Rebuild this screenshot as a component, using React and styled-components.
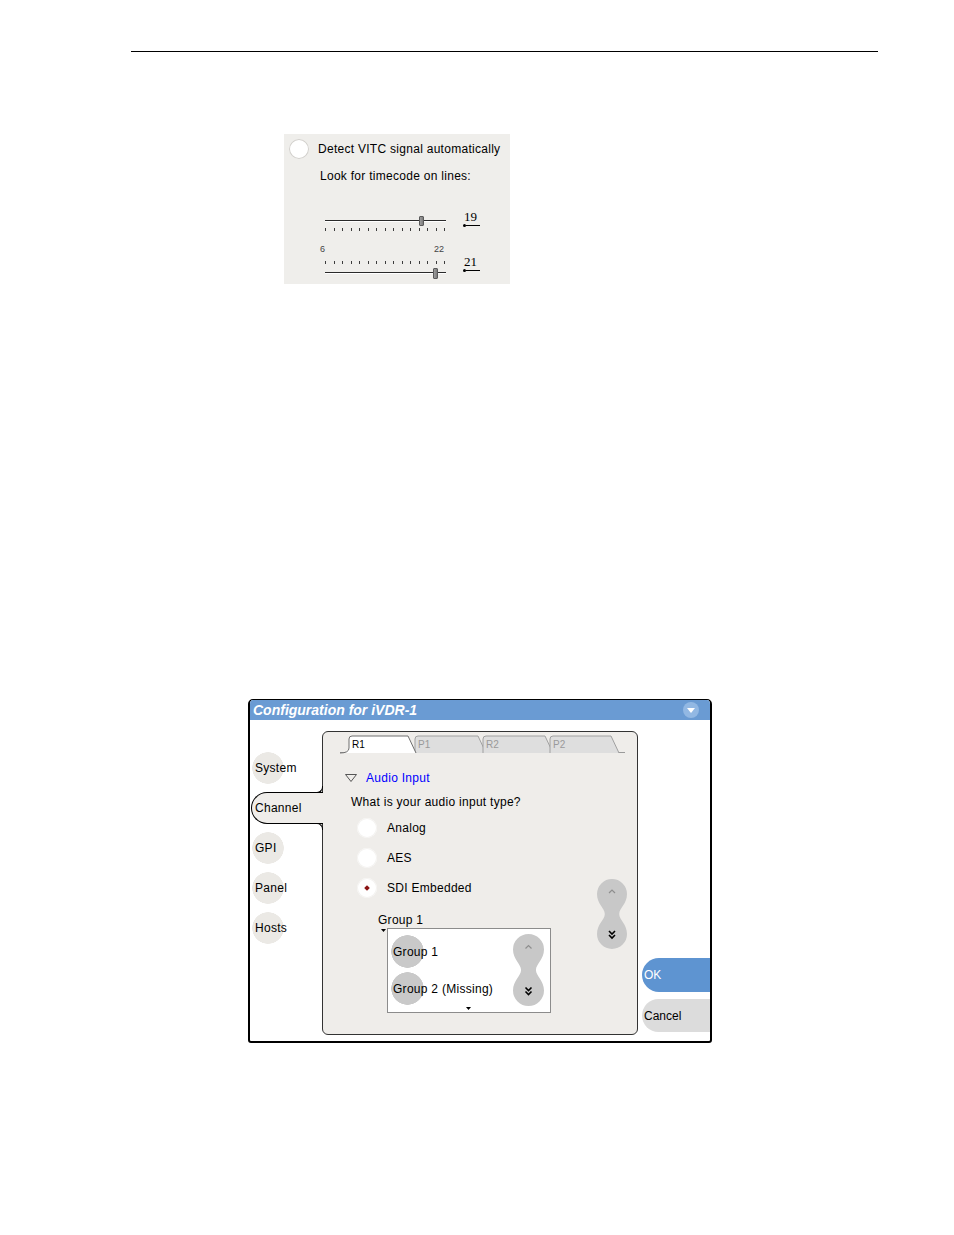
import React from 'react';
import styled, { createGlobalStyle } from 'styled-components';

const GlobalStyle = createGlobalStyle`
  html, body {
    margin: 0;
    padding: 0;
    background: #fff;
  }
  body {
    font-family: "Liberation Sans", Arial, sans-serif;
    font-size: 12px;
    letter-spacing: 0.28px;
    color: #000;
  }
`;

const Page = styled.div`
  width: 954px;
  height: 1235px;
  padding-top: 51px;
  box-sizing: border-box;
  overflow: hidden;
`;

const Rule = styled.div`
  margin-left: 131px;
  width: 747px;
  border-top: 1px solid #000;
`;

/* ---------- VITC panel ---------- */

const VitcPanel = styled.div`
  margin: 82px 0 0 284px;
  width: 226px;
  height: 150px;
  padding: 5px 0 0 5px;
  box-sizing: border-box;
  background: #efeeeb;
`;

const OptionRow = styled.div`
  display: flex;
  align-items: center;
  height: 20px;
`;

const Radio = styled.span`
  flex-shrink: 0;
  position: relative;
  width: 20px;
  height: 20px;
  border-radius: 50%;
  background: #fff;
  box-shadow: inset 0 0 0 1px ${p => (p.$ring ? '#d2d0cc' : '#f4f3f1')};
  &::after {
    content: '';
    display: ${p => (p.$checked ? 'block' : 'none')};
    position: absolute;
    left: 8px;
    top: 8px;
    width: 4px;
    height: 4px;
    transform: rotate(45deg);
    background: #8b1414;
  }
`;

const OptionLabel = styled.span`
  margin-left: ${p => p.$gap || 9}px;
  line-height: 14px;
`;

const Caption = styled.div`
  margin: 10px 0 0 31px;
  line-height: 14px;
`;

const SliderRow = styled.div`
  display: flex;
  align-items: flex-start;
  margin: ${p => p.$mt}px 0 0 36px;
`;

const SliderBody = styled.div`
  position: relative;
  width: 121px;
  display: flex;
  flex-direction: column;
`;

const Track = styled.div`
  height: 1px;
  margin-top: ${p => p.$mt}px;
  background: #2a2a2a;
  border-bottom: 1px solid #fff;
`;

const Ticks = styled.div`
  display: flex;
  justify-content: space-between;
  margin-top: ${p => p.$mt}px;
  padding: 0 1px 0 0;
`;

const Tick = styled.span`
  width: 1px;
  height: 3px;
  background: #3c3c3c;
`;

const Thumb = styled.div`
  position: absolute;
  left: ${p => p.$x}px;
  top: ${p => p.$y}px;
  width: 5px;
  height: ${p => p.$h}px;
  box-sizing: border-box;
  border: 1px solid #5a5a5a;
  border-radius: 1px;
  background: linear-gradient(90deg, #9c9c9c, #7d7d7d);
`;

const ValueBox = styled.div`
  margin-left: 17px;
  display: flex;
  flex-direction: column;
`;

const Value = styled.span`
  font-family: "Liberation Serif", "Times New Roman", serif;
  font-size: 13px;
  line-height: 12px;
  letter-spacing: 0;
  padding-left: 1px;
`;

const Marker = styled.div`
  display: flex;
  align-items: center;
  margin-top: 1px;
`;

const Dot = styled.span`
  width: 3px;
  height: 3px;
  border-radius: 50%;
  background: #000;
`;

const MarkerLine = styled.span`
  width: 14px;
  height: 1px;
  background: #000;
`;

const ScaleRow = styled.div`
  display: flex;
  justify-content: space-between;
  width: 124px;
  margin: 14px 0 0 31px;
  font-size: 9px;
  line-height: 9px;
  letter-spacing: 0;
  color: #444;
`;

const TICKS = Array.from({ length: 15 });

function Slider({ value, thumbX, variant }) {
  const top = variant === 'top';
  return (
    <SliderRow $mt={top ? 28 : 2}>
      <SliderBody>
        {top ? (
          <>
            <Track $mt={9} />
            <Ticks $mt={6}>
              {TICKS.map((_, i) => <Tick key={i} />)}
            </Ticks>
            <Thumb $x={thumbX} $y={5} $h={10} />
          </>
        ) : (
          <>
            <Ticks $mt={5}>
              {TICKS.map((_, i) => <Tick key={i} />)}
            </Ticks>
            <Track $mt={8} />
            <Thumb $x={thumbX} $y={12} $h={11} />
          </>
        )}
      </SliderBody>
      <ValueBox>
        <Value>{value}</Value>
        <Marker>
          <Dot />
          <MarkerLine />
        </Marker>
      </ValueBox>
    </SliderRow>
  );
}

/* ---------- Dialog ---------- */

const Dialog = styled.div`
  margin: 415px 0 0 248px;
  width: 464px;
  height: 344px;
  box-sizing: border-box;
  border: 2px solid #000;
  border-top-width: 1px;
  border-radius: 5px 5px 3px 3px;
  background: #fff;
  overflow: hidden;
  display: flex;
  flex-direction: column;
`;

const TitleBar = styled.div`
  flex-shrink: 0;
  height: 20px;
  display: flex;
  align-items: center;
  justify-content: space-between;
  padding: 0 11px 0 3px;
  background: #6a9bd3;
`;

const Title = styled.span`
  color: #fff;
  font-weight: bold;
  font-style: italic;
  font-size: 14px;
  line-height: 16px;
  letter-spacing: 0;
`;

const MenuButton = styled.span`
  width: 16px;
  height: 16px;
  border-radius: 50%;
  background: #92b8e3;
  display: flex;
  align-items: center;
  justify-content: center;
`;

const DialogBody = styled.div`
  flex: 1;
  display: flex;
`;

const NavCol = styled.div`
  width: 72px;
  flex-shrink: 0;
  padding-top: 32px;
  display: flex;
  flex-direction: column;
  gap: 8px;
`;

const NavItem = styled.div`
  position: relative;
  display: flex;
  align-items: center;
  height: 32px;
  box-sizing: border-box;
  padding-left: 5px;
  background: radial-gradient(circle at 18px 16px, #ebe9e5 0 15.5px, transparent 16px);

  &[data-active='true'] {
    z-index: 1;
    margin: 0 -1px 0 1px;
    padding-left: 3px;
    border: 1px solid #000;
    border-right: none;
    border-radius: 16px 0 0 16px;
    background: #efedea;
  }

  &[data-active='true']::before,
  &[data-active='true']::after {
    content: '';
    position: absolute;
    right: 0;
    width: 6px;
    height: 6px;
    border-right: 1px solid #000;
  }

  &[data-active='true']::before {
    top: -7px;
    border-bottom: 1px solid #000;
    border-bottom-right-radius: 6px;
  }

  &[data-active='true']::after {
    bottom: -7px;
    border-top: 1px solid #000;
    border-top-right-radius: 6px;
  }
`;

const Panel = styled.div`
  width: 316px;
  flex-shrink: 0;
  margin: 11px 0 6px;
  box-sizing: border-box;
  border: 1px solid #333;
  border-radius: 6px;
  background: #efedea;
  display: flex;
  flex-direction: column;
`;

const TabStrip = styled.div`
  display: flex;
  width: 285px;
  height: 17px;
  margin: 4px 0 0 17px;
  padding-left: 9px;
  box-sizing: border-box;
  border-bottom: 1px solid #9a9a9a;
`;

const Tab = styled.div`
  position: relative;
  flex-shrink: 0;
  width: ${p => p.$w}px;
  height: 17px;
  z-index: ${p => (p.$active ? 2 : 1)};

  svg {
    position: absolute;
    left: 0;
    top: 0;
    overflow: visible;
  }
`;

const TabLabel = styled.span`
  position: relative;
  display: block;
  padding-left: 3px;
  font-size: 10px;
  line-height: 17px;
  letter-spacing: 0;
  color: ${p => (p.$active ? '#000' : '#9a9a9a')};
`;

const SectionHead = styled.div`
  display: flex;
  align-items: center;
  height: 14px;
  margin: 18px 0 0 22px;
  gap: 9px;
`;

const SectionTitle = styled.span`
  color: #0000ff;
  line-height: 14px;
`;

const Question = styled.div`
  margin: 10px 0 0 28px;
  line-height: 14px;
`;

const ChoiceArea = styled.div`
  display: flex;
  align-items: flex-start;
  margin-top: 9px;
`;

const ChoiceList = styled.div`
  margin-left: 34px;
  display: flex;
  flex-direction: column;
  gap: 10px;
`;

const GroupSelect = styled.div`
  margin: 5px 0 0 21px;
`;

const GroupLabel = styled.div`
  line-height: 14px;
`;

const GroupRow = styled.div`
  display: flex;
  align-items: flex-start;
  margin-top: 1px;
`;

const Caret = styled.svg`
  display: block;
  flex-shrink: 0;
  margin: ${p => p.$m || '0'};
`;

const ListBox = styled.div`
  position: relative;
  width: 164px;
  height: 85px;
  margin-left: 1px;
  box-sizing: border-box;
  border: 1px solid #8c8c8c;
  background: #fff;
  display: flex;
  justify-content: space-between;
  padding: 5px 6px 0 3px;

  & > ${Caret} {
    position: absolute;
    left: 78px;
    bottom: 2px;
  }
`;

const ListItems = styled.div`
  display: flex;
  flex-direction: column;
  gap: 4px;
  padding-top: 1px;
`;

const ListItem = styled.div`
  height: 33px;
  display: flex;
  align-items: center;
  padding-left: 2px;
  white-space: nowrap;
  background: radial-gradient(circle at 16.5px 16.5px, #c9c9c9 0 16px, transparent 16.5px);
`;

const Pill = styled.svg`
  display: block;
  flex-shrink: 0;
  margin: ${p => p.$m || '0'};
`;

const ActionCol = styled.div`
  flex: 1;
  display: flex;
  flex-direction: column;
  justify-content: flex-end;
  gap: 7px;
  padding: 0 0 9px 4px;
`;

const ActionButton = styled.div`
  height: ${p => p.$h}px;
  display: flex;
  align-items: center;
  padding-left: 2px;
  border-radius: 17px 0 0 17px;
  background: ${p => (p.$primary ? '#5e94d1' : '#dcdcdc')};
  color: ${p => (p.$primary ? '#fff' : '#000')};
  line-height: 14px;
  letter-spacing: 0;
`;

function ScrollPill({ width = 30, height = 70, margin }) {
  const r = width / 2;
  const w = width;
  const h = height;
  const mid = h / 2;
  const waist = w * 0.26;
  const d = `M${r},0 A${r},${r} 0 0 1 ${w},${r} C${w},${r + 10} ${w - waist},${mid - 6} ${w - waist},${mid}
    C${w - waist},${mid + 6} ${w},${h - r - 10} ${w},${h - r} A${r},${r} 0 0 1 0,${h - r}
    C0,${h - r - 10} ${waist},${mid + 6} ${waist},${mid} C${waist},${mid - 6} 0,${r + 10} 0,${r}
    A${r},${r} 0 0 1 ${r},0 Z`;
  const cy = h - r + 1;
  return (
    <Pill width={w} height={h} viewBox={`0 0 ${w} ${h}`} $m={margin}>
      <path d={d} fill="#c8c8c8" />
      <path d={`M${r - 3},${r - 1} L${r},${r - 4} L${r + 3},${r - 1}`} fill="none" stroke="#8e8e8e" strokeWidth="1.2" />
      <path d={`M${r - 3},${cy - 4} L${r},${cy - 1} L${r + 3},${cy - 4} M${r - 3},${cy} L${r},${cy + 3} L${r + 3},${cy}`}
        fill="none" stroke="#000" strokeWidth="1.6" />
    </Pill>
  );
}

const TABS = [
  { label: 'R1', active: true, w: 66 },
  { label: 'P1', w: 68 },
  { label: 'R2', w: 67 },
  { label: 'P2', w: 66 },
];

function TabShape({ active, first, w }) {
  const right = w + (first ? 1 : 3);
  const slant = right - 8;
  const d = `${first ? 'M-9,17 Q0,17 0,12 ' : 'M0,17 '}L0,3 Q0,0 3,0 L${slant},0 L${right},17`;
  return (
    <svg width={right} height="17">
      <path d={`${d} Z`} fill={active ? '#fff' : '#dedede'} stroke="none" />
      <path d={d} fill="none" stroke={active ? '#6e6e6e' : '#a0a0a0'} strokeWidth="1" />
    </svg>
  );
}

const NAV = ['System', 'Channel', 'GPI', 'Panel', 'Hosts'];

export default function App() {
  return (
    <>
      <GlobalStyle />
      <Page>
        <Rule />

        <VitcPanel>
          <OptionRow>
            <Radio $ring />
            <OptionLabel>Detect VITC signal automatically</OptionLabel>
          </OptionRow>
          <Caption>Look for timecode on lines:</Caption>
          <Slider variant="top" value="19" thumbX={94} />
          <ScaleRow>
            <span>6</span>
            <span>22</span>
          </ScaleRow>
          <Slider variant="bottom" value="21" thumbX={108} />
        </VitcPanel>

        <Dialog>
          <TitleBar>
            <Title>Configuration for iVDR-1</Title>
            <MenuButton>
              <svg width="8" height="5" viewBox="0 0 8 5">
                <path d="M0,0 L8,0 L4,5 Z" fill="#fff" />
              </svg>
            </MenuButton>
          </TitleBar>

          <DialogBody>
            <NavCol>
              {NAV.map(name => (
                <NavItem key={name} data-active={name === 'Channel'}>
                  {name}
                </NavItem>
              ))}
            </NavCol>

            <Panel>
              <TabStrip>
                {TABS.map((t, i) => (
                  <Tab key={t.label} $w={t.w} $active={t.active}>
                    <TabShape active={t.active} first={i === 0} w={t.w} />
                    <TabLabel $active={t.active}>{t.label}</TabLabel>
                  </Tab>
                ))}
              </TabStrip>

              <SectionHead>
                <Caret width="12" height="8" viewBox="0 0 12 8">
                  <path d="M0.5,0.5 L11.5,0.5 L6,7.5 Z" fill="none" stroke="#555" strokeWidth="1" />
                </Caret>
                <SectionTitle>Audio Input</SectionTitle>
              </SectionHead>

              <Question>What is your audio input type?</Question>

              <ChoiceArea>
                <ChoiceList>
                  <OptionRow>
                    <Radio />
                    <OptionLabel $gap={10}>Analog</OptionLabel>
                  </OptionRow>
                  <OptionRow>
                    <Radio />
                    <OptionLabel $gap={10}>AES</OptionLabel>
                  </OptionRow>
                  <OptionRow>
                    <Radio $checked />
                    <OptionLabel $gap={10}>SDI Embedded</OptionLabel>
                  </OptionRow>

                  <GroupSelect>
                    <GroupLabel>Group 1</GroupLabel>
                    <GroupRow>
                      <Caret width="5" height="3" viewBox="0 0 5 3" $m="1px 0 0 3px">
                        <path d="M0,0 L5,0 L2.5,3 Z" fill="#000" />
                      </Caret>
                      <ListBox>
                        <ListItems>
                          <ListItem>Group 1</ListItem>
                          <ListItem>Group 2 (Missing)</ListItem>
                        </ListItems>
                        <ScrollPill width={31} height={72} />
                        <Caret width="5" height="3" viewBox="0 0 5 3">
                          <path d="M0,0 L5,0 L2.5,3 Z" fill="#000" />
                        </Caret>
                      </ListBox>
                    </GroupRow>
                  </GroupSelect>
                </ChoiceList>

                <ScrollPill width={30} height={70} margin="61px 10px 0 auto" />
              </ChoiceArea>
            </Panel>

            <ActionCol>
              <ActionButton $primary $h={34}>OK</ActionButton>
              <ActionButton $h={33}>Cancel</ActionButton>
            </ActionCol>
          </DialogBody>
        </Dialog>
      </Page>
    </>
  );
}
